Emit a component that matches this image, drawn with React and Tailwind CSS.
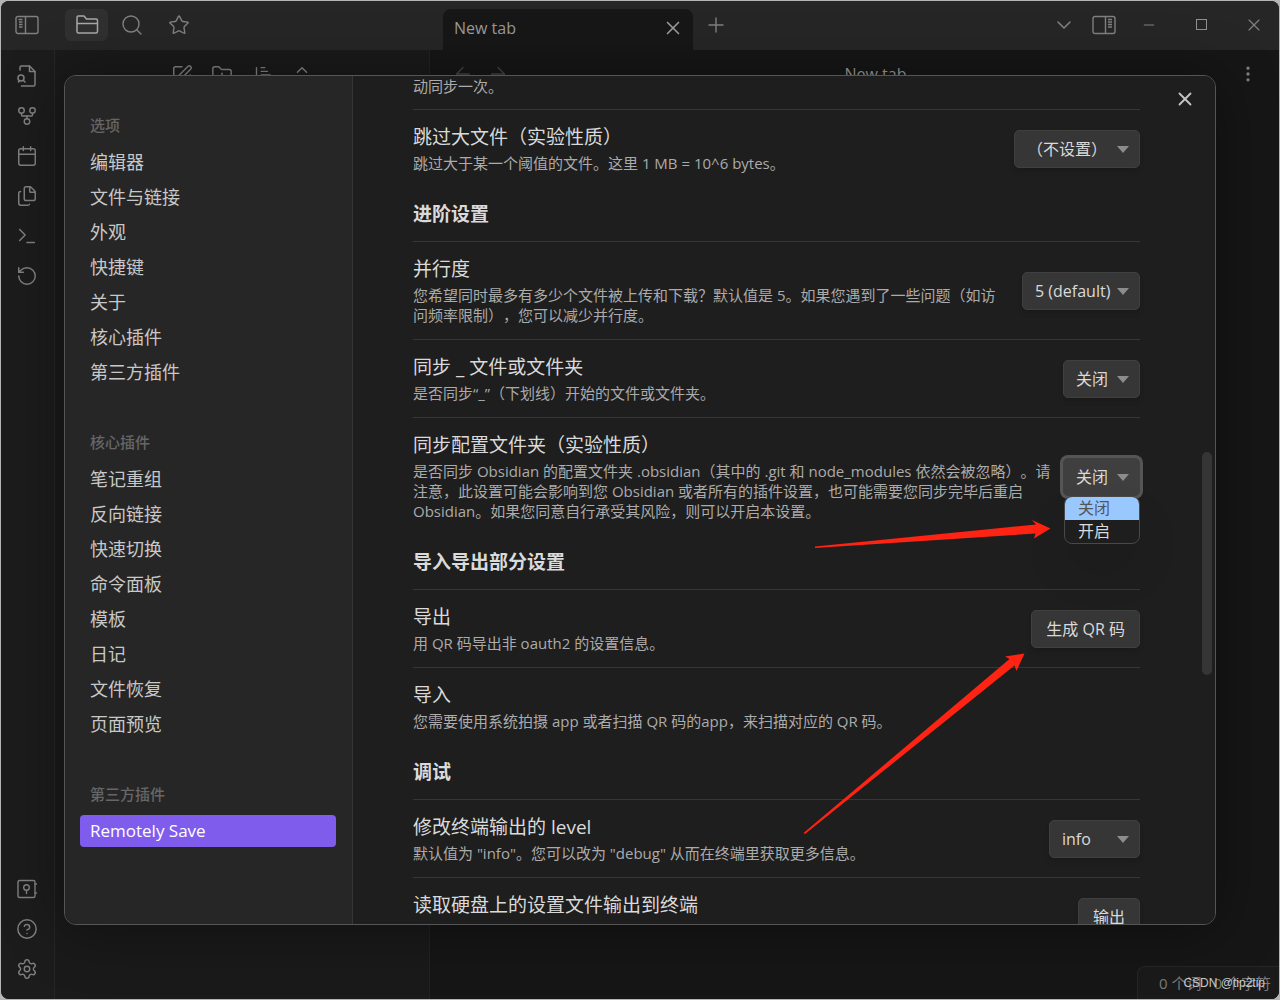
import { useState } from "react";
import {
  ArrowLeft,
  ArrowRight,
  Calendar,
  ChevronDown,
  ChevronsUpDown,
  CircleQuestionMark,
  Files,
  FolderPlus,
  GitFork,
  Minus,
  MoreVertical,
  Plus,
  RotateCcw,
  Search,
  Settings,
  SquarePen,
  Star,
  Terminal,
  X,
} from "lucide-react";

const navGroups = [
  {
    title: "选项",
    size: "text-[18px]",
    items: ["编辑器", "文件与链接", "外观", "快捷键", "关于", "核心插件", "第三方插件"],
  },
  {
    title: "核心插件",
    size: "text-[18px]",
    items: ["笔记重组", "反向链接", "快速切换", "命令面板", "模板", "日记", "文件恢复", "页面预览"],
  },
  { title: "第三方插件", size: "text-[17px]", items: ["Remotely Save"] },
];

const iconProps = { size: 22, strokeWidth: 1.6 };

function PanelIcon({ right }) {
  return (
    <svg width="24" height="20" viewBox="0 0 24 20" fill="none" stroke="currentColor" strokeWidth="1.4">
      <rect x="1" y="1.5" width="22" height="17" rx="2" />
      {right ? (
        <path d="M13.5 1.5v17M16 4.500h4M16 7h4M16 9.500h4M16 12h4" />
      ) : (
        <path d="M10.5 1.5v17M3.500 4.500h4M4 7h3.500M4 9.500h3.500M4 12h3.500" />
      )}
    </svg>
  );
}

function FolderIcon() {
  return (
    <svg width="24" height="22" viewBox="0 0 24 22" fill="none" stroke="currentColor" strokeWidth="1.5" strokeLinejoin="round">
      <path d="M2 17.500V3.500a1.500 1.500 0 0 1 1.500-1.500h5.500l2.500 3h9.500a1.500 1.500 0 0 1 1.500 1.500v11a1.500 1.500 0 0 1-1.500 1.500h-17.500a1.500 1.500 0 0 1-1.500-1.500zM2 9.500h20.500" />
    </svg>
  );
}

function FileSearchIcon() {
  return (
    <svg width="22" height="24" viewBox="0 0 22 24" fill="none" stroke="currentColor" strokeWidth="1.5" strokeLinecap="round" strokeLinejoin="round">
      <path d="M4 6V3.500A1.500 1.500 0 0 1 5.500 2H13.500L19 7.500V20.500A1.500 1.500 0 0 1 17.500 22H5.500" />
      <path d="M13.500 2v5.500H19" />
      <circle cx="5" cy="14" r="3" />
      <path d="M7.200 16.200L9 18M2.500 18l1-1.500" />
    </svg>
  );
}

function SortIcon() {
  return (
    <svg width="22" height="22" viewBox="0 0 24 24" fill="none" stroke="currentColor" strokeWidth="1.5" strokeLinecap="round" strokeLinejoin="round">
      <path d="M6 4v16M3 17l3 3 3-3M11 4h4M11 8h7M11 12h10" />
    </svg>
  );
}

function VaultIcon() {
  return (
    <svg width="22" height="20" viewBox="0 0 22 20" fill="none" stroke="currentColor" strokeWidth="1.4" strokeLinecap="round">
      <rect x="2" y="1.500" width="17" height="17" rx="1.500" />
      <circle cx="10.500" cy="8.500" r="2.800" />
      <path d="M10.500 11.500v3M19 5h1.500M19 14h1.500" />
    </svg>
  );
}

function IconButton({ label, className = "", children }) {
  return (
    <button type="button" aria-label={label} className={`flex items-center justify-center ${className}`}>
      {children}
    </button>
  );
}

function TitleBar() {
  return (
    <header className="flex h-[49px] shrink-0 bg-[#262626] text-[#808080]">
      <div className="flex w-[442px] shrink-0 items-center pb-0.5 pl-[14px]">
        <IconButton label="折叠" className="w-6"><PanelIcon /></IconButton>
        <IconButton label="文件列表" className="ml-[26px] h-8 w-[43px] rounded-md bg-[#303030] text-[#a8a8a8]"><FolderIcon /></IconButton>
        <IconButton label="搜索" className="ml-[12px] w-6"><Search size={24} strokeWidth={1.4} /></IconButton>
        <IconButton label="星标" className="ml-[23px] w-6"><Star size={22} strokeWidth={1.5} /></IconButton>
      </div>
      <div className="flex h-[41px] w-[250px] items-center justify-between self-end rounded-t-lg bg-[#171717] pr-[9px] pb-1 pl-[11px]">
        <span className="text-[16px] text-[#9a9a9a]">New tab</span>
        <IconButton label="关闭标签页"><X size={22} strokeWidth={1.8} className="text-[#9a9a9a]" /></IconButton>
      </div>
      <IconButton label="新标签页" className="ml-[11px] pb-px"><Plus size={24} strokeWidth={1.4} /></IconButton>
      <div className="ml-auto flex items-center pr-[15px] pb-0.5">
        <IconButton label="标签页列表"><ChevronDown size={24} strokeWidth={1.6} /></IconButton>
        <IconButton label="展开" className="ml-4"><PanelIcon right /></IconButton>
        <IconButton label="最小化" className="ml-[25px]"><Minus size={16} strokeWidth={1.8} /></IconButton>
        <IconButton label="最大化" className="ml-[39px]">
          <span className="block size-[11px] border border-[#909090]" />
        </IconButton>
        <IconButton label="关闭" className="ml-[37px]"><X size={20} strokeWidth={1.4} /></IconButton>
      </div>
    </header>
  );
}

function Ribbon() {
  return (
    <nav className="flex w-[54px] shrink-0 flex-col items-center border-r border-[#262626] bg-[#1c1c1c] pt-[14px] pr-px pb-[18px] text-[#808080]">
      <div className="flex flex-col gap-4">
        <IconButton label="快速切换" className="h-6"><FileSearchIcon /></IconButton>
        <IconButton label="关系图谱" className="h-6"><GitFork {...iconProps} /></IconButton>
        <IconButton label="日记" className="h-6"><Calendar {...iconProps} /></IconButton>
        <IconButton label="模板" className="h-6"><Files {...iconProps} /></IconButton>
        <IconButton label="命令面板" className="h-6"><Terminal {...iconProps} /></IconButton>
        <IconButton label="同步" className="h-6"><RotateCcw {...iconProps} /></IconButton>
      </div>
      <div className="mt-auto flex flex-col gap-4">
        <IconButton label="打开其他库" className="h-6"><VaultIcon /></IconButton>
        <IconButton label="帮助" className="h-6"><CircleQuestionMark {...iconProps} /></IconButton>
        <IconButton label="设置" className="h-6"><Settings {...iconProps} /></IconButton>
      </div>
    </nav>
  );
}

function Workspace() {
  return (
    <div className="flex flex-1">
      <Ribbon />
      <aside className="flex w-[375px] shrink-0 items-start justify-center gap-[18px] border-r border-[#222] bg-[#1a1a1a] pt-[14px] text-[#808080]">
        <SquarePen {...iconProps} />
        <FolderPlus {...iconProps} />
        <SortIcon />
        <ChevronsUpDown {...iconProps} />
      </aside>
      <main className="relative flex-1 bg-[#161616]">
        <div className="flex items-center pt-3 pr-[21px] pl-[22px] text-[#444]">
          <ArrowLeft size={22} strokeWidth={1.5} />
          <ArrowRight size={22} strokeWidth={1.5} className="ml-[13px]" />
          <span className="flex-1 pl-1 text-center text-[16px] text-[#9a9a9a]">New tab</span>
          <MoreVertical size={20} strokeWidth={2} className="text-[#808080]" />
        </div>
        <footer className="absolute right-0 bottom-0 flex h-[33px] w-[142px] items-center justify-end gap-3 rounded-tl-lg border-t border-l border-[#262626] bg-[#1a1a1a] pr-2 text-[15px] whitespace-nowrap text-[#7a7a7a]">
          <span>0 个词</span>
          <span>0 个字符</span>
        </footer>
      </main>
    </div>
  );
}

function SettingsNav({ active, onSelect }) {
  return (
    <nav className="w-72 shrink-0 border-r border-[#363636] bg-[#262626] pt-[38px] pr-4 pl-[15px]">
      {navGroups.map((group) => (
        <div key={group.title} className="mb-[43px]">
          <div className="mb-[10px] px-[10px] text-[15px] leading-[22px] font-medium text-[#666]">{group.title}</div>
          <div className="flex flex-col gap-[3px]">
            {group.items.map((item) => (
              <button
                key={item}
                type="button"
                onClick={() => onSelect(item)}
                className={`h-8 rounded px-[10px] text-left leading-8 ${group.size} ${
                  active === item ? "bg-[#7f5cec] text-white" : "text-[#c8c8c8]"
                }`}
              >
                {item}
              </button>
            ))}
          </div>
        </div>
      ))}
    </nav>
  );
}

function Heading({ children }) {
  return <h3 className="pt-[15px] pb-[14px] text-[19px] leading-[25px] font-bold text-[#dadada]">{children}</h3>;
}

function SettingItem({ name, desc, children }) {
  return (
    <div className="flex items-center border-t border-[#363636] pt-[15px] pb-[14px]">
      <div className="mr-3 min-w-0 flex-1">
        <div className="text-[19px] leading-[25px] text-[#dadada]">{name}</div>
        <div className="mt-[3px] min-h-5 text-[15px] leading-5 text-[#ababab]">{desc}</div>
      </div>
      {children}
    </div>
  );
}

function Select({ label, options, width, focused }) {
  return (
    <div className={`relative mb-px ${width}`}>
      <select
        aria-label={label}
        className={`block h-[38px] w-full appearance-none rounded-[5px] border border-[#404040] pl-3 text-[16px] text-[#dadada] shadow-md outline-none ${
          focused ? "bg-[#3f3f3f] ring-3 ring-[#555]" : "bg-[#363636]"
        }`}
      >
        {options.map((o) => (
          <option key={o}>{o}</option>
        ))}
      </select>
      <svg className="pointer-events-none absolute top-4 right-[11px]" width="12" height="7" viewBox="0 0 12 7">
        <path d="M0 0h12L6 7z" fill="#8c8c8c" />
      </svg>
      {focused && (
        <ul className="absolute top-[38px] left-px z-10 w-[76px] overflow-hidden rounded-lg border border-[#484848] bg-[#1e1e1e] text-[16px] leading-[23px] text-[#dadada] shadow-2xl">
          <li className="bg-[#99c8ff] pl-[13px] text-[#555]">关闭</li>
          <li className="pl-[13px]">开启</li>
        </ul>
      )}
    </div>
  );
}

function ActionButton({ children }) {
  return (
    <button type="button" className="mb-px h-[38px] rounded-[5px] border border-[#404040] bg-[#363636] px-[14px] text-[16px] whitespace-nowrap text-[#dadada] shadow-md">
      {children}
    </button>
  );
}

function SettingsContent() {
  return (
    <div className="min-w-0 flex-1 overflow-hidden bg-[#1e1e1e] pr-[75px] pl-[60px] [text-spacing-trim:space-all]">
      <div className="pb-[13px] text-[15px] leading-5 text-[#ababab]">动同步一次。</div>
      <SettingItem name="跳过大文件（实验性质）" desc="跳过大于某一个阈值的文件。这里 1 MB = 10^6 bytes。">
        <Select label="跳过大文件" options={["（不设置）"]} width="w-[126px]" />
      </SettingItem>

      <Heading>进阶设置</Heading>
      <SettingItem name="并行度" desc="您希望同时最多有多少个文件被上传和下载？默认值是 5。如果您遇到了一些问题（如访问频率限制），您可以减少并行度。">
        <Select label="并行度" options={["5 (default)"]} width="w-[118px]" />
      </SettingItem>
      <SettingItem name="同步 _ 文件或文件夹" desc="是否同步“_”（下划线）开始的文件或文件夹。">
        <Select label="同步 _ 文件或文件夹" options={["关闭", "开启"]} width="w-[77px]" />
      </SettingItem>
      <SettingItem
        name="同步配置文件夹（实验性质）"
        desc="是否同步 Obsidian 的配置文件夹 .obsidian（其中的 .git 和 node_modules 依然会被忽略）。请注意，此设置可能会影响到您 Obsidian 或者所有的插件设置，也可能需要您同步完毕后重启 Obsidian。如果您同意自行承受其风险，则可以开启本设置。"
      >
        <Select label="同步配置文件夹" options={["关闭", "开启"]} width="w-[77px]" focused />
      </SettingItem>

      <Heading>导入导出部分设置</Heading>
      <SettingItem name="导出" desc="用 QR 码导出非 oauth2 的设置信息。">
        <ActionButton>生成 QR 码</ActionButton>
      </SettingItem>
      <SettingItem name="导入" desc="您需要使用系统拍摄 app 或者扫描 QR 码的app，来扫描对应的 QR 码。" />

      <Heading>调试</Heading>
      <SettingItem name="修改终端输出的 level" desc={'默认值为 "info"。您可以改为 "debug" 从而在终端里获取更多信息。'}>
        <Select label="修改终端输出的 level" options={["info", "debug"]} width="w-[91px]" />
      </SettingItem>
      <SettingItem name="读取硬盘上的设置文件输出到终端">
        <ActionButton>输出</ActionButton>
      </SettingItem>
    </div>
  );
}

function Arrows() {
  return (
    <svg className="pointer-events-none absolute top-0 left-0" width="1280" height="1000" viewBox="0 0 1280 1000" fill="#fe2312">
      <path d="M815 546.500L1036 524.500L1032 520L1050.500 528.500L1034 538.500L1035.500 533.500L815 548z" />
      <path d="M803.500 833L1009.500 659L1005 656.500L1024.500 653.500L1016.500 671L1014.500 665.500L805 834z" />
    </svg>
  );
}

export default function App() {
  const [active, setActive] = useState("Remotely Save");

  return (
    <div className="relative flex min-h-screen flex-col bg-[#b4b6b4] p-px font-['Open_Sans','Noto_Sans_CJK_SC',sans-serif]">
      <div className="flex flex-1 flex-col overflow-hidden rounded-lg bg-[#161616]">
        <TitleBar />
        <Workspace />
      </div>

      {/* settings modal */}
      <div className="absolute inset-0 flex items-center justify-center">
        <div role="dialog" aria-label="设置" className="relative flex h-[85vh] w-[90vw] overflow-hidden rounded-xl border border-[#555] shadow-[0_4px_60px_rgba(0,0,0,0.4)]">
          <SettingsNav active={active} onSelect={setActive} />
          <SettingsContent />
          <button type="button" aria-label="关闭设置" className="absolute top-3 right-[19px] text-[#c4c4c4]">
            <X size={22} strokeWidth={2} />
          </button>
          <div className="absolute top-[376px] right-[3px] h-[223px] w-[10px] rounded-full bg-[#353535]" />
        </div>
      </div>

      <Arrows />
      <div className="absolute right-[15px] bottom-[9px] font-['Liberation_Sans',sans-serif] text-[12px] leading-4 text-[#c8c8c8]">CSDN @tip2tip</div>
    </div>
  );
}
